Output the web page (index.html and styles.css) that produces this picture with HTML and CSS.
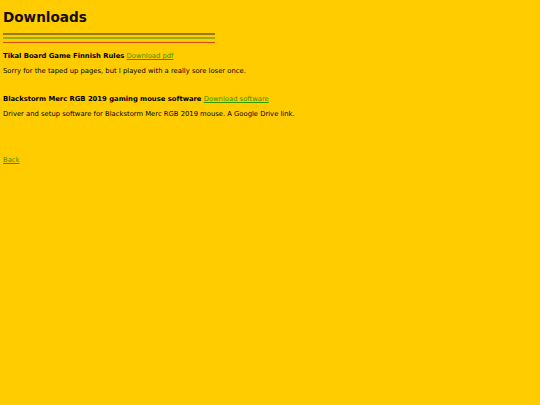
FILE: index.html
```html
<!DOCTYPE html>
<html>
<head>
<meta charset="utf-8">
<title>Downloads</title>
<link rel="stylesheet" href="styles.css">
</head>
<body>
<div class="page">
  <h1 class="title">Downloads</h1>
  <div class="rule">
    <div class="rule-brown"></div>
    <div class="rule-green"></div>
    <div class="rule-red"></div>
  </div>
  <div class="item">
    <p class="item-head"><b>Tikal Board Game Finnish Rules</b> <a href="#">Download pdf</a></p>
    <p class="item-desc">Sorry for the taped up pages, but I played with a really sore loser once.</p>
  </div>
  <div class="item">
    <p class="item-head"><b>Blackstorm Merc RGB 2019 gaming mouse software</b> <a href="#">Download software</a></p>
    <p class="item-desc">Driver and setup software for Blackstorm Merc RGB 2019 mouse. A Google Drive link.</p>
  </div>
  <p class="back"><a href="#">Back</a></p>
</div>
</body>
</html>
```

FILE: styles.css
```css
html, body {
  margin: 0;
  padding: 0;
  background: #ffcc00;
}
body {
  font-family: "DejaVu Sans", Verdana, sans-serif;
  color: #000;
}
.page {
  padding: 0 3px;
  display: flex;
  flex-direction: column;
  align-items: flex-start;
}
.title {
  font-size: 13.6px;
  line-height: 16px;
  font-weight: bold;
  margin: 9px 0 0 0;
  color: #140e00;
}
.rule {
  width: 212px;
  margin-top: 8px;
  display: flex;
  flex-direction: column;
}
.rule-brown {
  height: 2px;
  background: #9c7a1c;
}
.rule-green {
  height: 2px;
  margin-top: 2px;
  background: #94b010;
}
.rule-red {
  height: 1px;
  margin-top: 3px;
  background: #d9480a;
}
.item {
  margin-top: 9px;
  margin-bottom: 10px;
}
.item p {
  margin: 0;
  font-size: 6.8px;
  line-height: 9px;
}
.item .item-desc {
  margin-top: 6px;
}
a {
  color: #379500;
  text-decoration: underline;
}
.back {
  margin: 27px 0 0 0;
  font-size: 6.8px;
  line-height: 9px;
}
```
